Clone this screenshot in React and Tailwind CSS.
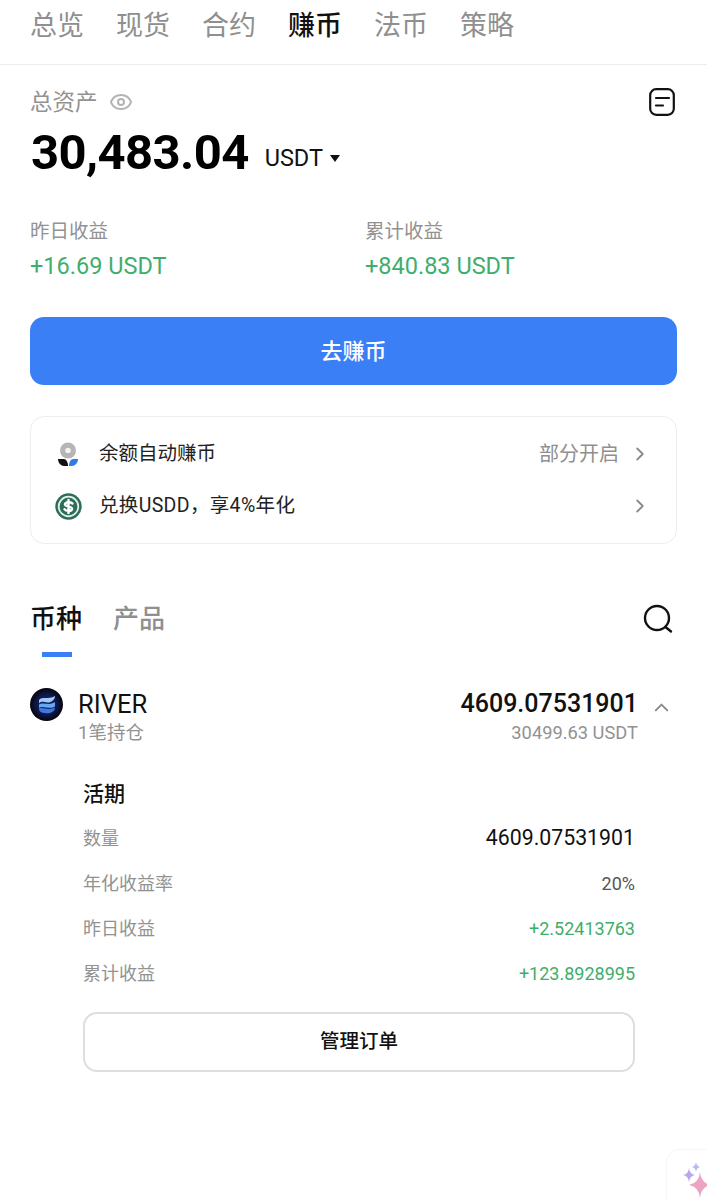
import React from 'react';
import { Eye, ChevronRight, ChevronUp } from 'lucide-react';

const sans = 'font-["Roboto","Noto_Sans_CJK_SC",sans-serif]';

const navTabs = ['总览', '现货', '合约', '赚币', '法币', '策略'];

const details = [
  { label: '数量', value: '4609.07531901', cls: 'text-[21.3px] text-[#111]' },
  { label: '年化收益率', value: '20%', cls: 'text-[18px] text-[#555]' },
  { label: '昨日收益', value: '+2.52413763', cls: 'text-[18px] text-[#3fae6b]' },
  { label: '累计收益', value: '+123.8928995', cls: 'text-[18px] text-[#3fae6b]' },
];

function AutoEarnIcon() {
  return (
    <svg width="26" height="26" viewBox="0 0 26 26" className="shrink-0">
      <circle cx="13" cy="9.5" r="8" fill="#b5b5b5" />
      <circle cx="13" cy="9.5" r="2.8" fill="#f2f2f2" />
      <path d="M3 18 H9 C11 18 13 21 13 25 H9 C6 25 3 22 3 18 Z" fill="#111" />
      <path d="M23 18 H18 C16 18 14 21 14 25 H17 C20 25 23 22 23 18 Z" fill="#2f7bea" />
    </svg>
  );
}

function UsddIcon() {
  return (
    <svg width="27" height="27" viewBox="0 0 27 27" className="shrink-0">
      <circle cx="13.5" cy="13.5" r="13.2" fill="#2b6f57" />
      <circle cx="13.5" cy="13.5" r="9.8" fill="none" stroke="#e6f0ec" strokeWidth="1.8" />
      <path d="M17.4 10.4 C16 8.6 10.6 8.6 10 11.2 C9.6 14 17.4 13 17 16 C16.6 18.5 10.8 18.3 9.6 16.4 M13.5 7 V20" fill="none" stroke="#fff" strokeWidth="2.5" strokeLinecap="round" />
    </svg>
  );
}

function RiverIcon() {
  return (
    <svg width="33" height="33" viewBox="0 0 33 33" className="shrink-0">
      <defs>
        <radialGradient id="riverBg" cx="50%" cy="50%" r="50%">
          <stop offset="0%" stopColor="#1a2a72" />
          <stop offset="65%" stopColor="#0e1645" />
          <stop offset="100%" stopColor="#04050d" />
        </radialGradient>
      </defs>
      <circle cx="16.5" cy="16.5" r="16.5" fill="url(#riverBg)" />
      <path d="M9 12 C12 8 18 12 25 8 C25 12 21 14.5 18 14.5 C14 14.5 12 12.5 9 15.5 Z" fill="#9ccdf7" />
      <path d="M9 16.5 C13 13.5 18 18.5 25 14 V18.5 C20 22 13 17 9 20 Z" fill="#6aa6f2" />
      <path d="M9 20.5 C13 18.5 18 23 25 19.5 C25 24 19 26 15 25 C12 25 9 24 9 20.5 Z" fill="#3f78e0" />
    </svg>
  );
}

function Sparkles() {
  return (
    <svg width="28" height="38" viewBox="0 0 28 38" className="block">
      <path d="M17 10 Q18 21 28 23 Q18 25 17 36 Q16 25 6 23 Q16 21 17 10 Z" fill="#eda3c4" />
      <path d="M6 6 Q6.6 12 12 13 Q6.6 14 6 20 Q5.4 14 0 13 Q5.4 12 6 6 Z" fill="#b9a6ea" />
      <path d="M13 0 Q13.4 4 17 5 Q13.4 6 13 10 Q12.6 6 9 5 Q12.6 4 13 0 Z" fill="#b4bcf0" />
    </svg>
  );
}

export default function App() {
  return (
    <div className={`relative h-[1200px] w-[707px] overflow-hidden bg-white ${sans}`}>
      {/* Top tabs */}
      <nav className="flex h-[65px] gap-8 border-b border-[#ececec] pl-[30px] pt-[7px]">
        {navTabs.map((tab) => (
          <span key={tab} className={`text-[27px] leading-[38px] ${tab === '赚币' ? 'font-medium text-[#111]' : 'text-[#8f8f8f]'}`}>
            {tab}
          </span>
        ))}
      </nav>

      <main className="px-[30px]">
        {/* Balance */}
        <div className="flex items-center justify-between pt-[22px]">
          <div className="flex items-center gap-[11px]">
            <span className="text-[22.5px] leading-[30px] text-[#929292]">总资产</span>
            <Eye className="h-[24px] w-[24px] text-[#b3b3b3]" strokeWidth={2} />
          </div>
          <svg width="26" height="28" viewBox="0 0 26 28" className="mr-[2px]">
            <rect x="1.2" y="1.2" width="23.6" height="25.6" rx="6" fill="none" stroke="#111" strokeWidth="2.2" />
            <path d="M7 10 H20 M7 17.5 H14" stroke="#111" strokeWidth="2.2" strokeLinecap="round" />
          </svg>
        </div>
        <div className="mt-[7px] flex items-center pl-px">
          <span className="text-[49px] font-bold leading-[58px] tracking-[-0.6px] text-black">30,483.04</span>
          <span className="ml-[16px] mt-[10px] text-[23.5px] leading-[30px] text-[#111]">USDT</span>
          <span className="ml-[7px] mt-[10px] h-0 w-0 border-x-[5px] border-t-[7px] border-x-transparent border-t-[#111]" />
        </div>

        {/* Earnings */}
        <div className="mt-[36px] grid grid-cols-[335px_1fr]">
          <div>
            <div className="text-[19.5px] leading-[28px] text-[#929292]">昨日收益</div>
            <div className="mt-[5px] text-[23.5px] leading-[30px] text-[#3fae6b]">+16.69 USDT</div>
          </div>
          <div>
            <div className="text-[19.5px] leading-[28px] text-[#929292]">累计收益</div>
            <div className="mt-[5px] text-[23.5px] leading-[30px] text-[#3fae6b]">+840.83 USDT</div>
          </div>
        </div>

        <button className="mt-[36px] flex h-[68px] w-full items-center justify-center rounded-[14px] bg-[#3a7ff6] text-[22px] font-medium text-white">
          去赚币
        </button>

        {/* Shortcuts */}
        <div className="mt-[31px] h-[128px] rounded-[14px] border border-[#ededed] pl-[24px] pr-[25px] pt-[11px]">
          <div className="flex h-[52px] items-center">
            <AutoEarnIcon />
            <span className="ml-[18px] text-[19.5px] text-[#222]">余额自动赚币</span>
            <span className="ml-auto text-[20px] text-[#8f8f8f]">部分开启</span>
            <ChevronRight className="ml-[10px] h-[22px] w-[22px] text-[#8a8a8a]" strokeWidth={2} />
          </div>
          <div className="flex h-[52px] items-center">
            <UsddIcon />
            <span className="ml-[17px] text-[19.5px] tracking-[0.35px] text-[#222]">兑换USDD，享4%年化</span>
            <ChevronRight className="ml-auto h-[22px] w-[22px] text-[#8a8a8a]" strokeWidth={2} />
          </div>
        </div>

        {/* Asset tabs */}
        <div className="mt-[53px] flex items-start justify-between">
          <div className="flex gap-[31px]">
            <div className="flex flex-col items-center">
              <span className="text-[26px] font-medium leading-[44px] text-[#111]">币种</span>
              <span className="ml-[2px] mt-[11px] h-[5px] w-[30px] bg-[#3a7ff6]" />
            </div>
            <span className="text-[26px] font-medium leading-[44px] text-[#8f8f8f]">产品</span>
          </div>
          <svg width="30" height="30" viewBox="0 0 30 30" className="mr-[4px] mt-[7px]">
            <circle cx="14" cy="14" r="12" fill="none" stroke="#111" strokeWidth="2.4" />
            <path d="M22.5 23 L28 27.5" stroke="#111" strokeWidth="2.4" strokeLinecap="round" />
          </svg>
        </div>

        {/* River row */}
        <div className="mt-[31px] flex items-start">
          <RiverIcon />
          <div className="ml-[15px]">
            <div className="text-[25.5px] leading-[32px] text-[#111]">RIVER</div>
            <div className="text-[18.5px] leading-[26px] text-[#929292]">1笔持仓</div>
          </div>
          <div className="ml-auto mr-[39px] text-right">
            <div className="text-[25px] font-medium leading-[32px] text-[#111]">4609.07531901</div>
            <div className="text-[18.3px] leading-[26px] text-[#929292]">30499.63 USDT</div>
          </div>
          <ChevronUp className="absolute left-[650px] top-[696px] h-[23px] w-[23px] text-[#8a8a8a]" strokeWidth={2} />
        </div>

        {/* Holding detail */}
        <div className="ml-[53px] mr-[42px] mt-[33px]">
          <div className="text-[21px] font-medium leading-[30px] text-[#111]">活期</div>
          <div className="mt-[12px] flex flex-col gap-[11px]">
            {details.map((row) => (
              <div key={row.label} className="flex h-[34px] items-center justify-between">
                <span className="text-[18px] text-[#929292]">{row.label}</span>
                <span className={row.cls}>{row.value}</span>
              </div>
            ))}
          </div>
          <button className="mt-[22px] flex h-[60px] w-full items-center justify-center rounded-[14px] border-2 border-[#dedede] text-[19.5px] font-medium text-[#111]">
            管理订单
          </button>
        </div>
      </main>

      {/* Floating assistant */}
      <div className="absolute left-[666px] top-[1149px] h-[51px] w-[41px] overflow-hidden rounded-tl-[14px] border-l border-t border-[#f6f6f6] pl-[16px] pt-[12px]">
        <Sparkles />
      </div>
    </div>
  );
}
